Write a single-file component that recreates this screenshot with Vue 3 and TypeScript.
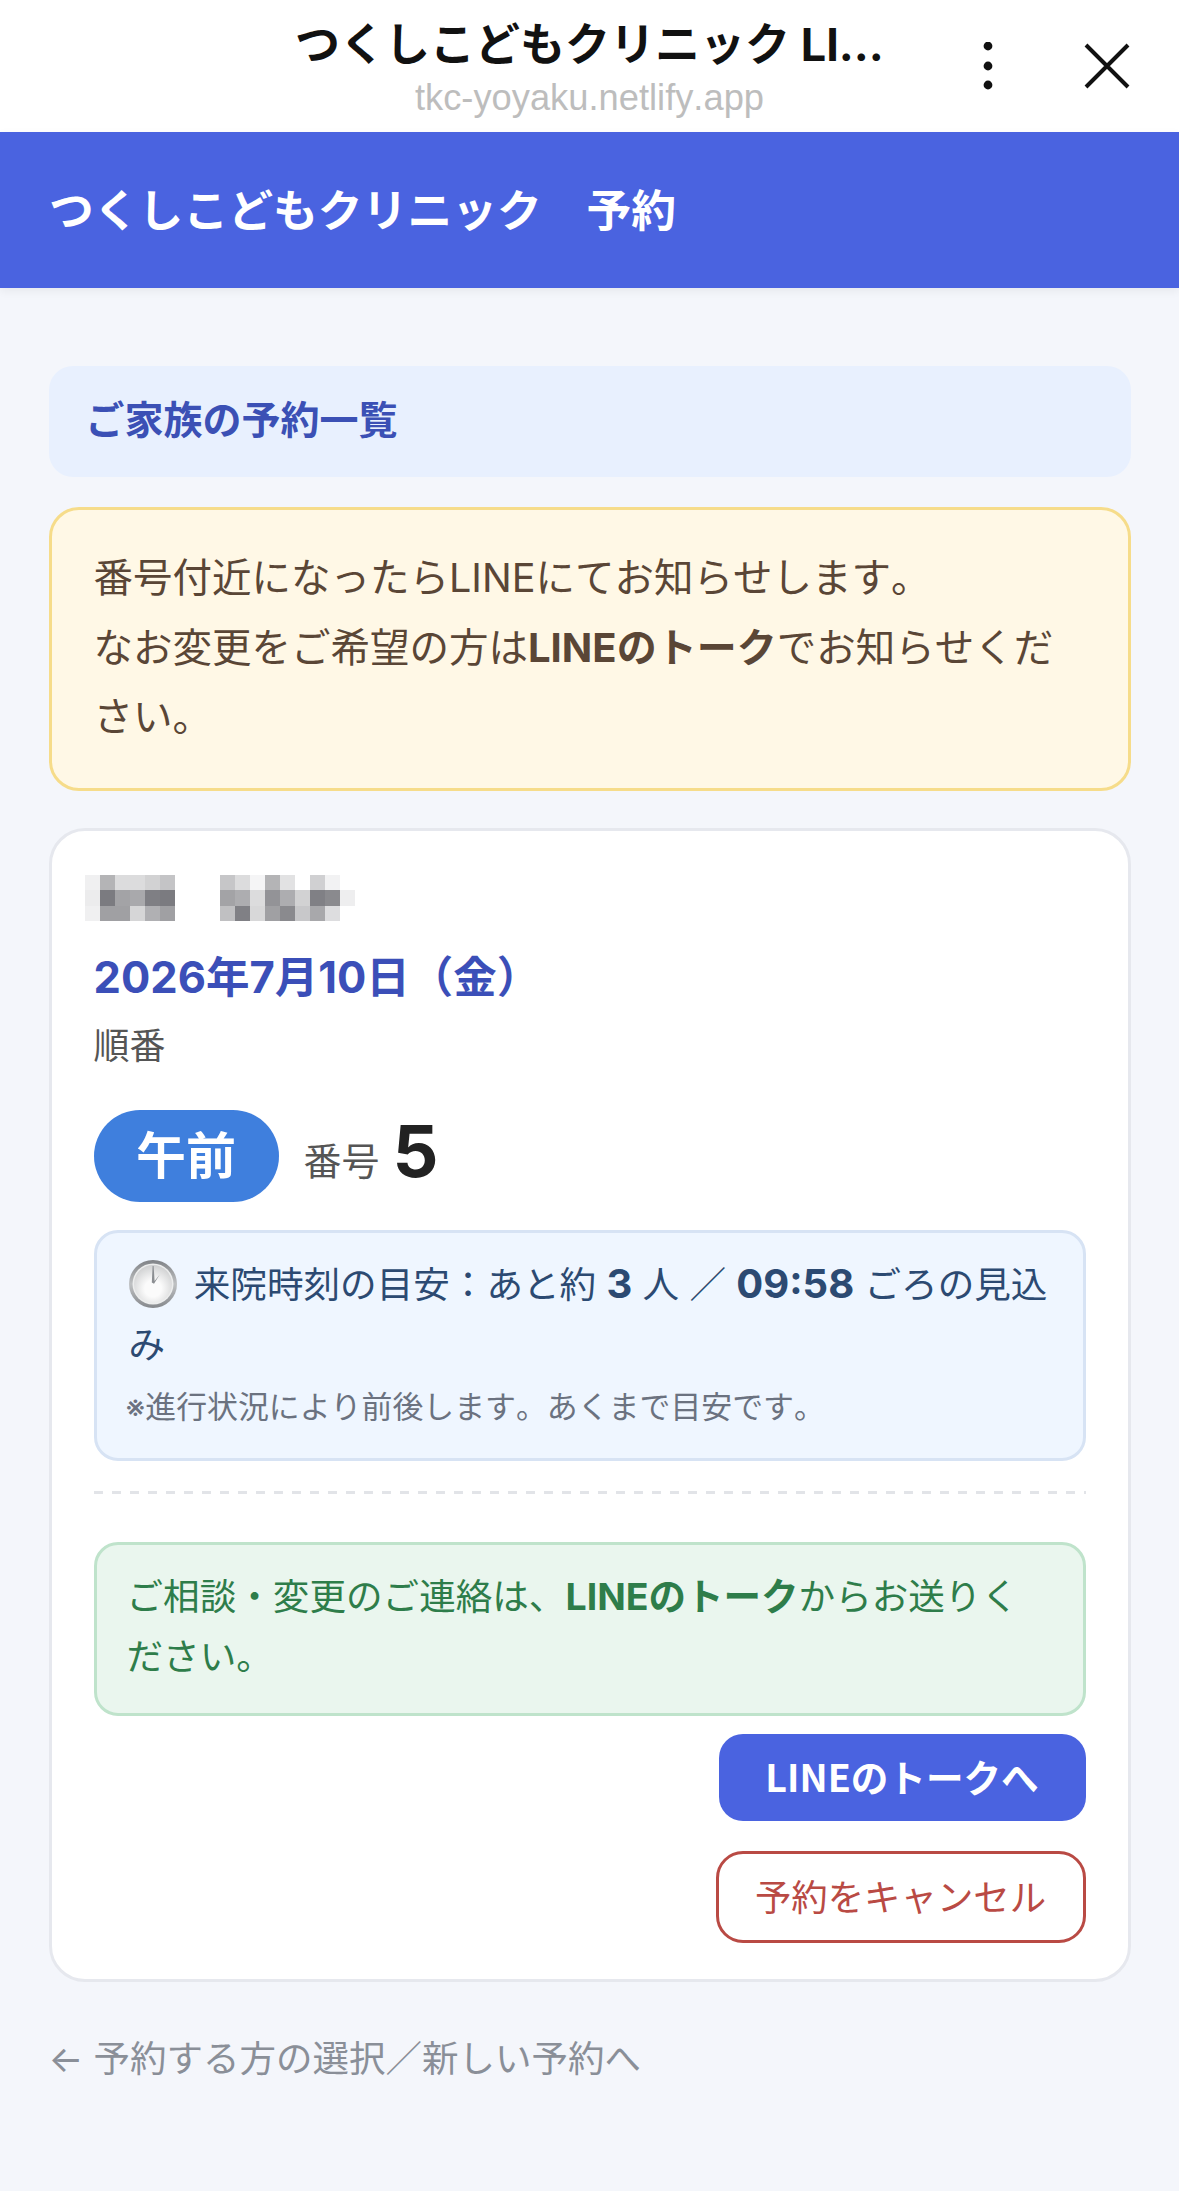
<script setup lang="ts">
const firstCells = [
  '#f0f0f1', '#b4b4b6', '#dcdcdd', '#dcdcdd', '#d2d2d3', '#c4c4c6',
  '#ececed', '#7b7b80', '#a3a3a6', '#a9a9ac', '#7f7f84', '#7b7b80',
  '#f0f0f1', '#a0a0a3', '#a0a0a3', '#d6d6d7', '#b0b0b3', '#a0a0a3'
]
const secondCells = [
  '#c6c6c8', '#dcdcdd', '#f5f5f6', '#b4b4b6', '#e2e2e3', '#ffffff', '#d0d0d2', '#f2f2f3', '#ffffff',
  '#a3a3a6', '#adadb0', '#dcdcdd', '#939397', '#adadb0', '#d2d2d3', '#808085', '#8a8a8e', '#eeeeef',
  '#c0c0c2', '#808085', '#d8d8d9', '#a0a0a3', '#8a8a8e', '#c8c8ca', '#a8a8ab', '#dddddf', '#ffffff'
]
</script>

<template>
  <div class="page">
    <div class="sheetbar">
      <div></div>
      <div class="sheet-titles">
        <div class="sheet-title">つくしこどもクリニック LI...</div>
        <div class="sheet-url">tkc-yoyaku.netlify.app</div>
      </div>
      <div class="sheet-actions">
        <svg class="icon-dots" viewBox="0 0 12 48" aria-hidden="true">
          <circle cx="6" cy="4" r="4.4" />
          <circle cx="6" cy="24" r="4.4" />
          <circle cx="6" cy="43" r="4.4" />
        </svg>
        <svg class="icon-close" viewBox="0 0 48 48" aria-hidden="true">
          <path d="M3 3 L45 45 M45 3 L3 45" />
        </svg>
      </div>
    </div>

    <header class="app-header">つくしこどもクリニック　予約</header>

    <main class="content">
      <h2 class="section-title">ご家族の予約一覧</h2>

      <div class="notice">
        番号付近になったらLINEにてお知らせします。<br />なお変更をご希望の方は<strong>LINEのトーク</strong>でお知らせください。
      </div>

      <section class="card">
        <div class="name-row">
          <div class="pixels pixels-a">
            <i v-for="(c, i) in firstCells" :key="i" :style="{ background: c }"></i>
          </div>
          <div class="pixels pixels-b">
            <i v-for="(c, i) in secondCells" :key="i" :style="{ background: c }"></i>
          </div>
        </div>
        <div class="date">2026年7月10日（金）</div>
        <div class="order-label">順番</div>
        <div class="order-row">
          <span class="pill">午前</span>
          <span class="number-label">番号</span>
          <span class="number">5</span>
        </div>

        <div class="eta">
          <div class="eta-main">
            <svg class="clock" viewBox="0 0 48 48" aria-hidden="true">
              <defs>
                <linearGradient id="clockRim" x1="0" y1="0" x2="0" y2="1">
                  <stop offset="0" stop-color="#7f8286" />
                  <stop offset="0.5" stop-color="#bfc1c3" />
                  <stop offset="1" stop-color="#85888c" />
                </linearGradient>
                <radialGradient id="clockFace" cx="0.5" cy="0.62" r="0.62">
                  <stop offset="0.35" stop-color="#fbfbfb" />
                  <stop offset="1" stop-color="#cfd0d1" />
                </radialGradient>
              </defs>
              <circle cx="24" cy="24" r="24" fill="url(#clockRim)" />
              <circle cx="24" cy="24" r="20.5" fill="#eceded" />
              <circle cx="24" cy="24" r="19" fill="url(#clockFace)" />
              <path d="M22.8 22.5 L23.6 6 L24.6 6 L25.6 21 L30.8 14.5 L25 23.8 Z" fill="#8b8e92" />
            </svg>
            来院時刻の目安：あと約 <b>3</b> 人 ／ <b>09:58</b> ごろの見込み
          </div>
          <div class="eta-note">※進行状況により前後します。あくまで目安です。</div>
        </div>

        <div class="dash"></div>

        <div class="contact">
          ご相談・変更のご連絡は、<strong>LINEのトーク</strong>からお送りください。
        </div>

        <div class="actions">
          <button class="btn btn-line" type="button">LINEのトークへ</button>
          <button class="btn btn-cancel" type="button">予約をキャンセル</button>
        </div>
      </section>

      <a class="back"><span class="arrow">←</span> 予約する方の選択／新しい予約へ</a>
    </main>
  </div>
</template>

<style>
html, body { margin: 0; background: #f4f6fb; }
</style>

<style scoped>
.page {
  width: 1179px;
  min-height: 2191px;
  background: #f4f6fb;
  font-family: Inter, "Noto Sans CJK JP", sans-serif;
  font-kerning: none;
  color: #222;
}
.sheetbar {
  height: 132px;
  background: #fff;
  display: grid;
  grid-template-columns: 1fr 600px 1fr;
  align-items: start;
}
.sheet-titles { text-align: center; padding-top: 15px; white-space: nowrap; }
.sheet-title { font-size: 45px; line-height: 60px; font-weight: 700; color: #111; }
.sheet-url { font-family: "Liberation Sans", sans-serif; font-size: 36.3px; line-height: 46px; color: #bdbdbd; }
.sheet-actions { display: flex; justify-content: flex-end; align-items: flex-start; gap: 89px; padding: 42px 48px 0 0; }
.icon-dots { width: 12px; height: 48px; fill: #111; }
.icon-close { width: 48px; height: 48px; fill: none; stroke: #111; stroke-width: 4px; }
.app-header {
  height: 156px;
  background: #4a63e0;
  color: #fff;
  font-size: 44.8px;
  font-weight: 700;
  line-height: 158px;
  padding-left: 49px;
  box-shadow: 0 3px 9px rgba(0, 0, 0, 0.06);
  position: relative;
}
.content { padding: 78px 48.5px 0; }
.section-title {
  margin: 0 0 30px;
  height: 111px;
  line-height: 107px;
  padding-left: 37px;
  box-sizing: border-box;
  background: #e8f0fe;
  border-radius: 24px;
  font-size: 39px;
  font-weight: 700;
  color: #3b50b5;
}
.notice {
  box-sizing: border-box;
  height: 284px;
  padding: 34px 52px 34px 42px;
  border: 3px solid #f6dc8a;
  border-radius: 30px;
  background: #fff8e6;
  font-size: 39.5px;
  line-height: 69px;
  color: #5a4636;
  margin-bottom: 37px;
}
.notice strong { font-weight: 700; font-size: 40px; }
.card {
  box-sizing: border-box;
  height: 1154px;
  background: #fff;
  border: 3px solid #e6e8ee;
  border-radius: 36px;
  padding: 44px 42px 0;
}
.name-row { display: flex; gap: 45px; margin-left: -8.5px; height: 46px; }
.pixels { display: grid; grid-auto-rows: 15.4px; }
.pixels-a { grid-template-columns: repeat(6, 15px); }
.pixels-b { grid-template-columns: repeat(9, 15px); }
.date {
  margin-top: 25px;
  font-size: 43.5px;
  line-height: 63px;
  font-weight: 700;
  color: #3b4fb8;
}
.order-label { margin-top: 10px; font-size: 36px; line-height: 54px; color: #555; }
.order-row { margin-top: 37px; display: flex; align-items: center; height: 92px; }
.pill {
  width: 185px;
  height: 92px;
  border-radius: 46px;
  background: #3f7fdd;
  color: #fff;
  font-size: 50px;
  font-weight: 700;
  line-height: 92px;
  text-align: center;
}
.number-label { margin-left: 25px; font-size: 38px; color: #555; align-self: flex-end; line-height: 72px; margin-bottom: 5px; }
.number {
  margin-left: 13px;
  margin-top: 1px;
  font-size: 72px;
  font-weight: 700;
  color: #222;
  line-height: 80px;
  align-self: flex-start;
}
.eta {
  margin-top: 28px;
  box-sizing: border-box;
  height: 231px;
  border: 3px solid #d7e3f4;
  border-radius: 24px;
  background: #eff6ff;
  padding: 21px 32px 0;
  color: #2c4a72;
}
.eta-main { font-size: 36.6px; line-height: 60px; }
.eta-main b { font-weight: 700; font-size: 40px; }
.clock { width: 48px; height: 48px; vertical-align: -10px; margin-right: 7px; }
.eta-note { margin: 10px 0 0 -3px; font-size: 30.9px; line-height: 44px; color: #6b7280; }
.dash {
  margin-top: 30px;
  height: 3px;
  background: repeating-linear-gradient(90deg, #e2e4e8 0 9px, transparent 9px 18px);
}
.contact {
  margin-top: 48px;
  box-sizing: border-box;
  height: 174px;
  padding: 22px 36px 0 30px;
  border: 3px solid #bfe3cb;
  border-radius: 24px;
  background: #eaf6ee;
  color: #2e7d4a;
  font-size: 36.6px;
  line-height: 60px;
}
.contact strong { font-weight: 700; font-size: 37.5px; }
.actions { display: flex; flex-direction: column; align-items: flex-end; margin-top: 18px; gap: 30px; }
.btn { font-family: "Noto Sans CJK JP", sans-serif; cursor: pointer; box-sizing: border-box; font-size: 36.4px; }
.btn-line {
  width: 367px;
  height: 87px;
  border: 0;
  border-radius: 24px;
  background: #4a63e0;
  color: #fff;
  font-weight: 700;
  font-size: 37.6px;
  padding: 0 0 4px;
}
.btn-cancel {
  width: 370px;
  height: 92px;
  border: 3px solid #b94a44;
  border-radius: 27px;
  background: #fff;
  color: #b94a44;
  padding: 0 0 4px;
}
.back {
  display: block;
  margin-top: 50px;
  font-size: 36.5px;
  line-height: 54px;
  color: #8a8f98;
}
</style>
